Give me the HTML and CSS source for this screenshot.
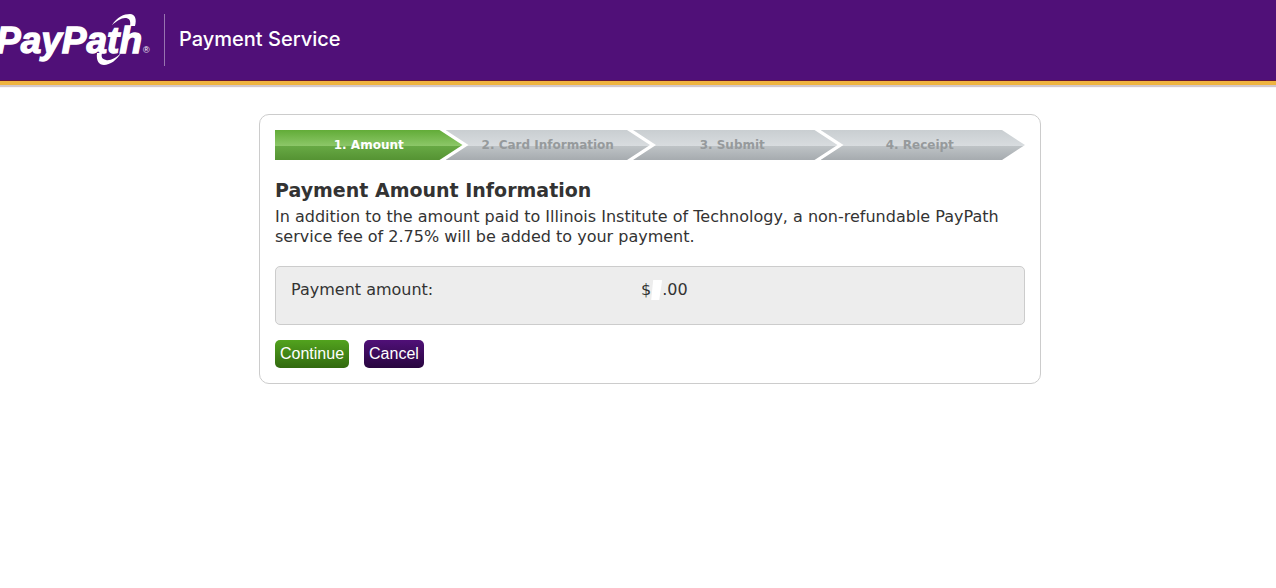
FILE: index.html
```html
<!DOCTYPE html>
<html lang="en">
<head>
<meta charset="utf-8">
<title>PayPath Payment Service</title>
<link rel="stylesheet" href="styles.css">
</head>
<body>
<header class="banner">
  <svg class="logo" width="164" height="80" viewBox="0 0 164 80" role="img" aria-label="PayPath">
    <text class="logo-name" x="-4" y="53">PayPath</text>
    <path class="logo-mark" d="M112 25C117 17 124 14 130 14C135 14 137 19 135 26L130 26C131 20 129 18 125 18C121 18 117 21 112 25Z"/>
    <path class="logo-mark" d="M97 53C96 61 99 65 104 65C110 65 117 60 121 53C116 58 110 61 106 60C102 59 101 57 102 53Z"/>
    <text class="logo-reg" x="143" y="53">®</text>
  </svg>
  <span class="service">Payment Service</span>
</header>
<main class="card">
  <ol class="steps">
    <li class="step current" aria-current="step">1. Amount</li>
    <li class="step">2. Card Information</li>
    <li class="step">3. Submit</li>
    <li class="step">4. Receipt</li>
  </ol>
  <h1 class="title">Payment Amount Information</h1>
  <p class="intro">In addition to the amount paid to Illinois Institute of Technology, a non-refundable PayPath service fee of 2.75% will be added to your payment.</p>
  <dl class="amount">
    <dt>Payment amount:</dt>
    <dd>$<span class="blank"></span>.00</dd>
  </dl>
  <div class="actions">
    <button class="button continue" type="button">Continue</button>
    <button class="button cancel" type="button">Cancel</button>
  </div>
</main>
</body>
</html>
```
FILE: styles.css
```css
* { box-sizing: border-box; }
body {
  margin: 0;
  background: #fff;
  color: #333;
  font: 16px/20px Verdana, "DejaVu Sans", sans-serif;
}
.banner {
  display: flex;
  align-items: flex-start;
  height: 85px;
  background: #501078;
  border-bottom: 4px solid #efb440;
  box-shadow: inset 0 -1px #651536, 0 2px 1px #d2c8cc;
}
.logo { display: block; flex: none; }
.logo-name { font: italic bold 37px "Liberation Sans", Arial, sans-serif; fill: #fff; stroke: #fff; stroke-width: 1.3; }
.logo-reg { font: 9px "Liberation Sans", Arial, sans-serif; fill: #fff; }
.logo-mark { fill: #fff; }
.service {
  margin-top: 14px;
  height: 52px;
  padding-left: 14px;
  border-left: 1px solid #9874b0;
  color: #fff;
  font: 500 20px/50px Inter, sans-serif;
}
.card {
  width: 782px;
  max-width: 100%;
  margin: 29px auto 0;
  margin-left: max(0px, calc(50% - 379px));
  padding: 15px;
  border: 1px solid #ccc;
  border-radius: 10px;
}
.steps {
  display: grid;
  grid-template-columns: repeat(4, 1fr);
  margin: 0 0 20px;
  padding: 0;
  list-style: none;
}
.step {
  margin-left: -17px;
  background: linear-gradient(#c9ced1, #d8dcdf 53%, #bec3c6 54%, #a6abaf);
  clip-path: polygon(0 0, calc(100% - 23px) 0, 100% 50%, calc(100% - 23px) 100%, 0 100%, 23px 50%);
  color: #969a9c;
  font-size: 12px;
  font-weight: bold;
  line-height: 30px;
  text-align: center;
}
.step:nth-child(n + 3) { padding-right: 6px; }
.current {
  margin-left: 0;
  background: linear-gradient(#62ac38, #8cc768 53%, #67a944 54%, #559333);
  clip-path: polygon(0 0, calc(100% - 23px) 0, 100% 50%, calc(100% - 23px) 100%, 0 100%);
  color: #fff;
}
.title { margin: 0 0 7px; font-size: 19px; line-height: 20px; }
.intro { margin: 0 0 19px; }
.amount {
  display: grid;
  grid-template-columns: 350px 1fr;
  margin: 0 0 15px;
  padding: 13px 15px 24px;
  background: #ededed;
  border: 1px solid #ccc;
  border-radius: 5px;
}
.amount dd { display: flex; margin: 0; }
.blank {
  width: 11px;
  height: 20px;
  background: #fff;
  clip-path: polygon(2px 0, 100% 0, 8px 100%, 0 100%);
}
.actions { display: flex; gap: 15px; }
.button {
  height: 28px;
  padding: 0 5px;
  border: 0;
  border-radius: 5px;
  color: #fff;
  font: 16px/28px "Liberation Sans", Arial, sans-serif;
}
.continue { background: linear-gradient(#52a31e, #32690f); }
.cancel { background: linear-gradient(#501078, #28063f); }
```
